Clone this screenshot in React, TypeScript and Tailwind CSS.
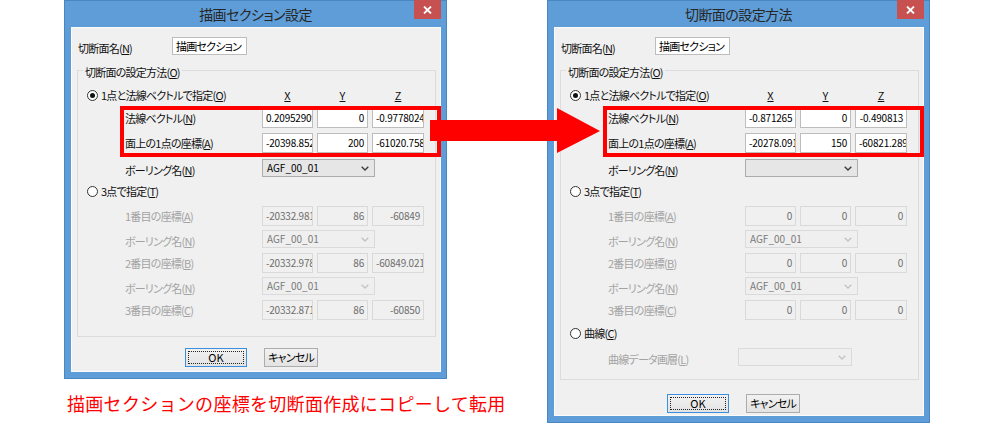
import React from "react";

const JP = "font-['Noto_Sans_CJK_JP','Noto_Sans_CJK_SC',sans-serif]";
const PALT = "[font-feature-settings:'palt'] tracking-[-0.07em]";

function L({ text, k, disabled }: { text: string; k: string; disabled?: boolean }) {
  return (
    <span
      className={`whitespace-nowrap text-[11px] leading-[16px] ${PALT} ${
        disabled ? "text-[#a3a3a3]" : "text-[#111]"
      }`}
    >
      {text}(<span className="underline underline-offset-[1px]">{k}</span>)
    </span>
  );
}

function Field({ value, disabled }: { value: string; disabled?: boolean }) {
  return (
    <div
      className={`h-[20px] border px-[3px] overflow-hidden whitespace-nowrap text-right text-[10px] tracking-[-0.2px] leading-[18px] ${
        disabled
          ? "bg-[#f0f0f0] border-[#d9d9d9] text-[#6d6d6d]"
          : "bg-white border-[#bdbdbd] text-black"
      }`}
    >
      {value}
    </div>
  );
}

function Chevron({ disabled }: { disabled?: boolean }) {
  return (
    <svg width="8" height="5" viewBox="0 0 8 5" className="shrink-0">
      <polyline
        points="0.7,0.7 4,4 7.3,0.7"
        fill="none"
        stroke={disabled ? "#c2c2c2" : "#3a3a3a"}
        strokeWidth="1.3"
      />
    </svg>
  );
}

function Combo({ value, disabled, wide }: { value: string; disabled?: boolean; wide?: boolean }) {
  return (
    <div
      className={`${wide ? "w-[114px]" : "w-[113px]"} h-[18px] border flex items-center justify-between pl-[4px] pr-[5px] text-[10px] leading-[16px] ${
        disabled
          ? "bg-[#efefef] border-[#dadada] text-[#7a7a7a]"
          : "bg-[#e6e6e6] border-[#acacac] text-black"
      }`}
    >
      <span>{value}</span>
      <Chevron disabled={disabled} />
    </div>
  );
}

function Radio({ checked }: { checked?: boolean }) {
  return (
    <span className="w-[11px] h-[11px] rounded-full border border-[#333] bg-white flex items-center justify-center shrink-0">
      {checked && <span className="w-[5px] h-[5px] rounded-full bg-[#111]" />}
    </span>
  );
}

function CoordRow({
  label,
  k,
  values,
  disabled,
  className = "",
}: {
  label: string;
  k: string;
  values: string[];
  disabled?: boolean;
  className?: string;
}) {
  return (
    <div className={`grid grid-cols-[133px_51px_51px_52px] gap-x-[4px] items-center h-[20px] ${className}`}>
      <L text={label} k={k} disabled={disabled} />
      {values.map((v, i) => (
        <Field key={i} value={v} disabled={disabled} />
      ))}
    </div>
  );
}

function ComboRow({
  labelDisabled,
  value,
  disabled,
  className = "",
}: {
  labelDisabled?: boolean;
  value: string;
  disabled?: boolean;
  className?: string;
}) {
  return (
    <div className={`flex items-center h-[18px] ${className}`}>
      <div className="w-[137px]">
        <L text="ボーリング名" k="N" disabled={labelDisabled} />
      </div>
      <Combo value={value} disabled={disabled} />
    </div>
  );
}

type Data = {
  title: string;
  n: string[];
  p: string[];
  combo: string;
  p1: string[];
  p2: string[];
  p3: string[];
  curve?: boolean;
};

const leftData: Data = {
  title: "描画セクション設定",
  n: ["0.20952909", "0", "-0.97780245"],
  p: ["-20398.8523", "200", "-61020.7586"],
  combo: "AGF_00_01",
  p1: ["-20332.9817", "86", "-60849"],
  p2: ["-20332.9784", "86", "-60849.0213"],
  p3: ["-20332.8713", "86", "-60850"],
};

const rightData: Data = {
  title: "切断面の設定方法",
  n: ["-0.871265", "0", "-0.490813"],
  p: ["-20278.0913", "150", "-60821.2893"],
  combo: "",
  p1: ["0", "0", "0"],
  p2: ["0", "0", "0"],
  p3: ["0", "0", "0"],
  curve: true,
};

function Dialog({ d }: { d: Data }) {
  return (
    <div className="w-[383px] bg-[#5e9dd7] border border-[#4a86c0] flex flex-col shrink-0">
      <div className="relative h-[26px] flex items-center justify-center">
        <span className={`text-[14px] leading-[20px] text-[#262626] [font-feature-settings:'palt'] tracking-[-0.04em]`}>
          {d.title}
        </span>
        <div className="absolute top-[-1px] right-[5px] w-[27px] h-[19px] bg-[#c75050] flex items-center justify-center">
          <svg width="9" height="8" viewBox="0 0 9 8">
            <path d="M1 0.5 L8 7.5 M8 0.5 L1 7.5" stroke="white" strokeWidth="1.8" />
          </svg>
        </div>
      </div>
      <div className="pl-[6px] pr-[5px] pb-[6px]">
        <div
          className={`bg-[#f0f0f0] ${
            d.curve ? "h-[389px]" : "h-[345px]"
          } flex flex-col pt-[10px] shadow-[inset_0_0_0_1px_#fbfbfb]`}
        >
          {/* name row */}
          <div className="flex items-center h-[18px] pl-[7px]">
            <div className="w-[94px]">
              <L text="切断面名" k="N" />
            </div>
            <div
              className={`w-[75px] h-[18px] border border-[#bdbdbd] bg-white pl-[3px] text-[11px] leading-[16px] text-black whitespace-nowrap overflow-hidden ${PALT}`}
            >
              描画セクション
            </div>
          </div>

          {/* group box */}
          <div
            className={`relative mt-[15px] ml-[6px] w-[359px] border border-[#dcdcdc] pl-[9px] pt-[16px] ${
              d.curve ? "pb-[13px]" : "pb-[16px]"
            } flex flex-col`}
          >
            <div className="absolute left-[5px] top-[-9px] px-[2px] bg-[#f0f0f0] leading-[16px]">
              <L text="切断面の設定方法" k="O" />
            </div>

            <div className="grid grid-cols-[171px_51px_51px_52px] gap-x-[4px] items-center h-[16px]">
              <div className="flex items-center gap-[3px]">
                <Radio checked />
                <L text="1点と法線ベクトルで指定" k="O" />
              </div>
              <span className="text-center text-[11px] leading-[16px] text-[#111] underline">X</span>
              <span className="text-center text-[11px] leading-[16px] text-[#111] underline">Y</span>
              <span className="text-center text-[11px] leading-[16px] text-[#111] underline">Z</span>
            </div>

            <div className="relative ml-[38px] mt-[5px]">
              <CoordRow label="法線ベクトル" k="N" values={d.n} />
              <CoordRow label="面上の1点の座標" k="A" values={d.p} className="mt-[5px]" />
              <div className="absolute top-[-2px] bottom-[-4px] left-[-5px] right-[-6px] border-[4px] border-[#ff0000] pointer-events-none" />
            </div>

            <ComboRow value={d.combo} className="ml-[38px] mt-[6px]" />

            <div className="flex items-center gap-[3px] h-[16px] mt-[6px]">
              <Radio />
              <L text="3点で指定" k="T" />
            </div>

            <CoordRow label="1番目の座標" k="A" values={d.p1} disabled className="ml-[38px] mt-[7px]" />
            <ComboRow value="AGF_00_01" disabled labelDisabled className="ml-[38px] mt-[4px]" />
            <CoordRow label="2番目の座標" k="B" values={d.p2} disabled className="ml-[38px] mt-[5px]" />
            <ComboRow value="AGF_00_01" disabled labelDisabled className="ml-[38px] mt-[4px]" />
            <CoordRow label="3番目の座標" k="C" values={d.p3} disabled className="ml-[38px] mt-[5px]" />

            {d.curve && (
              <>
                <div className="flex items-center gap-[3px] h-[16px] mt-[5px]">
                  <Radio />
                  <L text="曲線" k="C" />
                </div>
                <div className="flex items-center h-[18px] ml-[38px] mt-[7px]">
                  <div className="w-[130px]">
                    <L text="曲線データ画層" k="L" disabled />
                  </div>
                  <Combo value="" disabled wide />
                </div>
              </>
            )}
          </div>

          {/* buttons */}
          <div className={`flex gap-[17px] ${d.curve ? "mt-[14px] pl-[113px]" : "mt-[11px] pl-[114px]"}`}>
            <div className="relative w-[62px] h-[19px] border border-[#3c8fdc] bg-gradient-to-b from-[#f2f2f2] to-[#e3e3e3] flex items-center justify-center text-[11px] text-black">
              <div className="absolute inset-[2px] border border-dotted border-[#222]" />
              OK
            </div>
            <div
              className={`w-[54px] h-[19px] border border-[#acacac] bg-gradient-to-b from-[#f2f2f2] to-[#e3e3e3] flex items-center justify-center text-[11px] text-black ${PALT}`}
            >
              キャンセル
            </div>
          </div>
        </div>
      </div>
    </div>
  );
}

export default function App() {
  return (
    <div className={`relative w-[985px] h-[445px] bg-white overflow-hidden flex items-start pl-[64px] gap-[100px] ${JP}`}>
      <div className="w-[383px] shrink-0 flex flex-col">
        <Dialog d={leftData} />
        <div className="mt-[11px] pl-[3px] whitespace-nowrap text-[18px] leading-[26px] tracking-[0.3px] text-[#ff0000]">
          描画セクションの座標を切断面作成にコピーして転用
        </div>
      </div>
      <Dialog d={rightData} />
      <svg
        className="absolute left-0 top-0 pointer-events-none"
        width="985"
        height="445"
        viewBox="0 0 985 445"
      >
        <polygon points="430,120 557,120 557,108 600,131 557,153 557,141 430,141" fill="#ff0000" />
      </svg>
    </div>
  );
}
